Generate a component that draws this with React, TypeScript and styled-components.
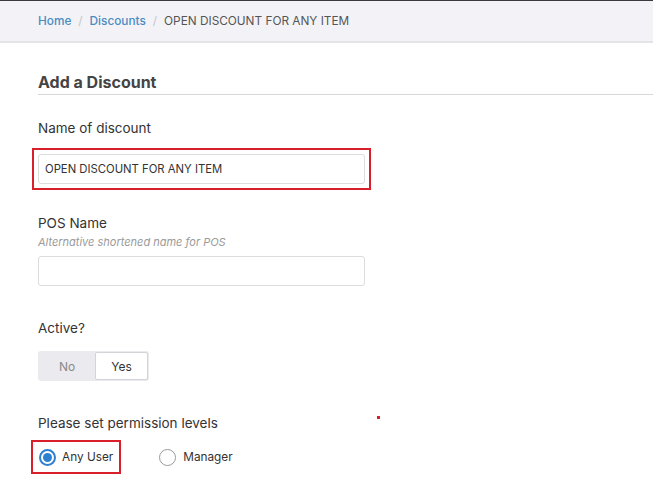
import styled, { createGlobalStyle } from "styled-components";

const GlobalStyle = createGlobalStyle`
  body {
    margin: 0;
    background: #ffffff;
    font-family: Inter, "Liberation Sans", Arial, sans-serif;
    color: #333333;
  }
`;

const Page = styled.div`
  position: relative;
  width: 653px;
  height: 484px;
  overflow: hidden;
  background: #ffffff;
`;

const TopBar = styled.nav`
  height: 40px;
  display: flex;
  align-items: center;
  gap: 7px;
  padding-left: 38px;
  border-top: 1px solid #3a3a40;
  border-bottom: 2px solid #e4e4e6;
  background: #f3f3f7;
  font-size: 11.8px;
`;

const Crumb = styled.a`
  color: #4a8cc2;
  text-decoration: none;
  font-weight: 500;
`;

const Separator = styled.span`
  color: #c6c6cc;
`;

const Current = styled.span`
  color: #555555;
`;

const Content = styled.main`
  padding-left: 38px;
`;

const Title = styled.h2`
  margin: 29px 0 0;
  padding-bottom: 2px;
  font-size: 16px;
  line-height: 20px;
  font-weight: 700;
  color: #444444;
  border-bottom: 1px solid #d8d8d8;
`;

const Label = styled.div<{ $top: number }>`
  margin-top: ${(p) => p.$top}px;
  font-size: 13.5px;
  line-height: 18px;
  color: #333333;
`;

const Help = styled.div`
  margin-top: 2px;
  font-size: 11px;
  line-height: 16px;
  font-style: italic;
  color: #9a9a9a;
`;

const Highlight = styled.div<{ $top: number }>`
  display: inline-flex;
  margin-top: ${(p) => p.$top}px;
  margin-left: -6px;
  padding: 4px;
  border: 2px solid #d9202a;
`;

const TextBox = styled.div<{ $top?: number }>`
  box-sizing: border-box;
  width: 327px;
  height: 30px;
  margin-top: ${(p) => p.$top ?? 0}px;
  display: flex;
  align-items: center;
  padding-left: 6px;
  border: 1px solid #dcdcdc;
  border-radius: 3px;
  background: #ffffff;
  font-size: 11.3px;
  color: #333333;
`;

const Toggle = styled.div`
  display: flex;
  width: 111px;
  height: 30px;
  margin-top: 14px;
  padding: 1px;
  box-sizing: border-box;
  border-radius: 3px;
  background: #ebebef;
`;

const ToggleOption = styled.div<{ $on?: boolean }>`
  flex: ${(p) => (p.$on ? "0 0 53px" : "1")};
  display: flex;
  align-items: center;
  justify-content: center;
  box-sizing: border-box;
  border-radius: 2px;
  font-size: 12px;
  color: ${(p) => (p.$on ? "#333333" : "#888888")};
  background: ${(p) => (p.$on ? "#ffffff" : "transparent")};
  border: ${(p) => (p.$on ? "1px solid #d4d4d8" : "none")};
`;

const RadioRow = styled.div`
  display: flex;
  align-items: center;
  margin-top: 8px;
  margin-left: -7px;
`;

const RadioBox = styled.div`
  display: flex;
  align-items: center;
  gap: 6px;
  height: 30px;
  padding: 0 6px 0 6px;
  border: 2px solid #d9202a;
`;

const RadioPlain = styled.div`
  display: flex;
  align-items: center;
  gap: 7px;
  margin-left: 38px;
`;

const Circle = styled.span<{ $checked?: boolean }>`
  box-sizing: border-box;
  width: 17px;
  height: 17px;
  border-radius: 50%;
  border: ${(p) => (p.$checked ? "2px solid #2f7fd1" : "1.5px solid #9a9a9a")};
  display: flex;
  align-items: center;
  justify-content: center;

  &::after {
    content: "";
    display: ${(p) => (p.$checked ? "block" : "none")};
    width: 9px;
    height: 9px;
    border-radius: 50%;
    background: #2f7fd1;
  }
`;

const RadioText = styled.span`
  font-size: 11.8px;
  color: #333333;
`;

const Dot = styled.span`
  position: absolute;
  left: 377px;
  top: 416px;
  width: 3px;
  height: 3px;
  background: #d9202a;
`;

export default function App() {
  return (
    <Page>
      <GlobalStyle />
      <TopBar>
        <Crumb href="#">Home</Crumb>
        <Separator>/</Separator>
        <Crumb href="#">Discounts</Crumb>
        <Separator>/</Separator>
        <Current>OPEN DISCOUNT FOR ANY ITEM</Current>
      </TopBar>
      <Content>
        <Title>Add a Discount</Title>

        <Label $top={24}>Name of discount</Label>
        <Highlight $top={11}>
          <TextBox>OPEN DISCOUNT FOR ANY ITEM</TextBox>
        </Highlight>

        <Label $top={24}>POS Name</Label>
        <Help>Alternative shortened name for POS</Help>
        <TextBox $top={6} />

        <Label $top={33}>Active?</Label>
        <Toggle>
          <ToggleOption>No</ToggleOption>
          <ToggleOption $on>Yes</ToggleOption>
        </Toggle>

        <Label $top={33}>Please set permission levels</Label>
        <RadioRow>
          <RadioBox>
            <Circle $checked />
            <RadioText>Any User</RadioText>
          </RadioBox>
          <RadioPlain>
            <Circle />
            <RadioText>Manager</RadioText>
          </RadioPlain>
        </RadioRow>
      </Content>
      <Dot />
    </Page>
  );
}
